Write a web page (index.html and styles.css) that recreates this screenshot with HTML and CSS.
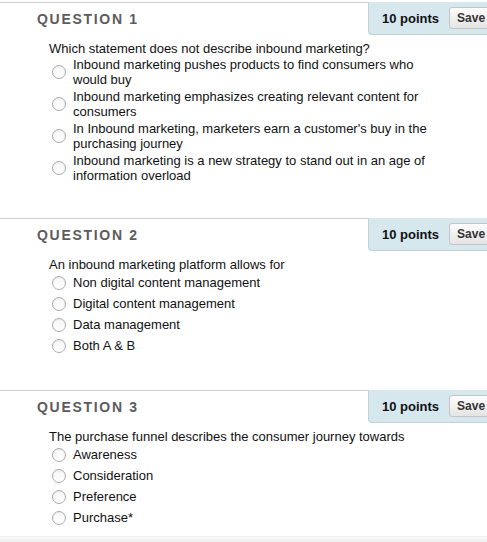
FILE: index.html
```html
<!DOCTYPE html>
<html lang="en">
<head>
  <meta charset="UTF-8">
  <meta name="viewport" content="width=device-width, initial-scale=1.0">
  <title>Quiz</title>
  <link rel="stylesheet" href="styles.css">
</head>
<body>
  <div class="quiz">

    <!-- Question 1 -->
    <div class="question">
      <div class="question-header">
        <h3 class="question-title">QUESTION 1</h3>
        <div class="points-box">
          <span class="points">10 points</span>
          <button class="save-btn">Save</button>
        </div>
      </div>
      <div class="question-body">
        <div class="question-text">Which statement does not describe inbound marketing?</div>
        <ul class="options">
          <li class="option two-line"><span class="radio"></span><span class="label">Inbound marketing pushes products to find consumers who would buy</span></li>
          <li class="option two-line"><span class="radio"></span><span class="label">Inbound marketing emphasizes creating relevant content for consumers</span></li>
          <li class="option two-line"><span class="radio"></span><span class="label">In Inbound marketing, marketers earn a customer's buy in the purchasing journey</span></li>
          <li class="option two-line"><span class="radio"></span><span class="label">Inbound marketing is a new strategy to stand out in an age of information overload</span></li>
        </ul>
      </div>
    </div>

    <!-- Question 2 -->
    <div class="question">
      <div class="question-header">
        <h3 class="question-title">QUESTION 2</h3>
        <div class="points-box">
          <span class="points">10 points</span>
          <button class="save-btn">Save</button>
        </div>
      </div>
      <div class="question-body">
        <div class="question-text">An inbound marketing platform allows for</div>
        <ul class="options">
          <li class="option"><span class="radio"></span><span class="label">Non digital content management</span></li>
          <li class="option"><span class="radio"></span><span class="label">Digital content management</span></li>
          <li class="option"><span class="radio"></span><span class="label">Data management</span></li>
          <li class="option"><span class="radio"></span><span class="label">Both A &amp; B</span></li>
        </ul>
      </div>
    </div>

    <!-- Question 3 -->
    <div class="question">
      <div class="question-header">
        <h3 class="question-title">QUESTION 3</h3>
        <div class="points-box">
          <span class="points">10 points</span>
          <button class="save-btn">Save</button>
        </div>
      </div>
      <div class="question-body">
        <div class="question-text">The purchase funnel describes the consumer journey towards</div>
        <ul class="options">
          <li class="option"><span class="radio"></span><span class="label">Awareness</span></li>
          <li class="option"><span class="radio"></span><span class="label">Consideration</span></li>
          <li class="option"><span class="radio"></span><span class="label">Preference</span></li>
          <li class="option"><span class="radio"></span><span class="label">Purchase*</span></li>
        </ul>
      </div>
    </div>

    <div class="next-shade"></div>
  </div>
</body>
</html>
```

FILE: styles.css
```css
body {
  margin: 0;
  font-family: "Liberation Sans", Arial, Helvetica, sans-serif;
  color: #111;
  background-color: #fff;
  overflow: hidden;
}

.quiz {
  padding-top: 2px;
  width: 487px;
  overflow: hidden;
}

.question {
  border-top: 1px solid #cfcfcf;
  margin-bottom: 34px;
}

.question-header {
  display: flex;
  justify-content: space-between;
  align-items: flex-start;
  height: 32px;
}

.question-title {
  margin: 0;
  padding: 8px 0 0 37px;
  font-size: 14px;
  font-weight: bold;
  letter-spacing: 1.7px;
  color: #5c5c5c;
  line-height: 16px;
}

.points-box {
  display: flex;
  align-items: center;
  gap: 10px;
  height: 33px;
  width: 119px;
  padding-left: 13px;
  margin-top: -1px;
  background-color: #d6e8ee;
  border-left: 1px solid #c3d2d8;
  border-bottom: 1px solid #c3d2d8;
  border-bottom-left-radius: 4px;
  box-sizing: border-box;
  white-space: nowrap;
}

.points {
  font-size: 13px;
  font-weight: bold;
  color: #111;
}

.save-btn {
  flex-shrink: 0;
  height: 22px;
  padding: 0 30px 0 7px;
  font-family: inherit;
  font-size: 12px;
  font-weight: bold;
  color: #333;
  border: 1px solid #c4c4c4;
  border-radius: 3px;
  background: linear-gradient(#fdfdfd, #e4e4e4);
  text-align: left;
}

.question-body {
  padding: 6px 0 0 49px;
}

.question-text {
  font-size: 13px;
  line-height: 15px;
}

.options {
  list-style: none;
  margin: 0;
  padding: 0 0 0 3px;
}

.option {
  display: flex;
  align-items: center;
  gap: 7px;
  min-height: 21px;
  font-size: 13px;
  line-height: 15px;
}

.option.two-line {
  padding: 1px 0;
}

.option .label {
  max-width: 360px;
}

.radio {
  flex-shrink: 0;
  width: 12px;
  height: 12px;
  border: 1px solid #ababab;
  border-radius: 50%;
  background: linear-gradient(#f6f6f6, #fff);
  box-shadow: inset 0 1px 1px rgba(0, 0, 0, 0.06);
}

.next-shade {
  height: 8px;
  margin-top: -26px;
  background: linear-gradient(#fafafa, #e6e6e6);
  border-top: 1px solid #f0f0f0;
}
```
